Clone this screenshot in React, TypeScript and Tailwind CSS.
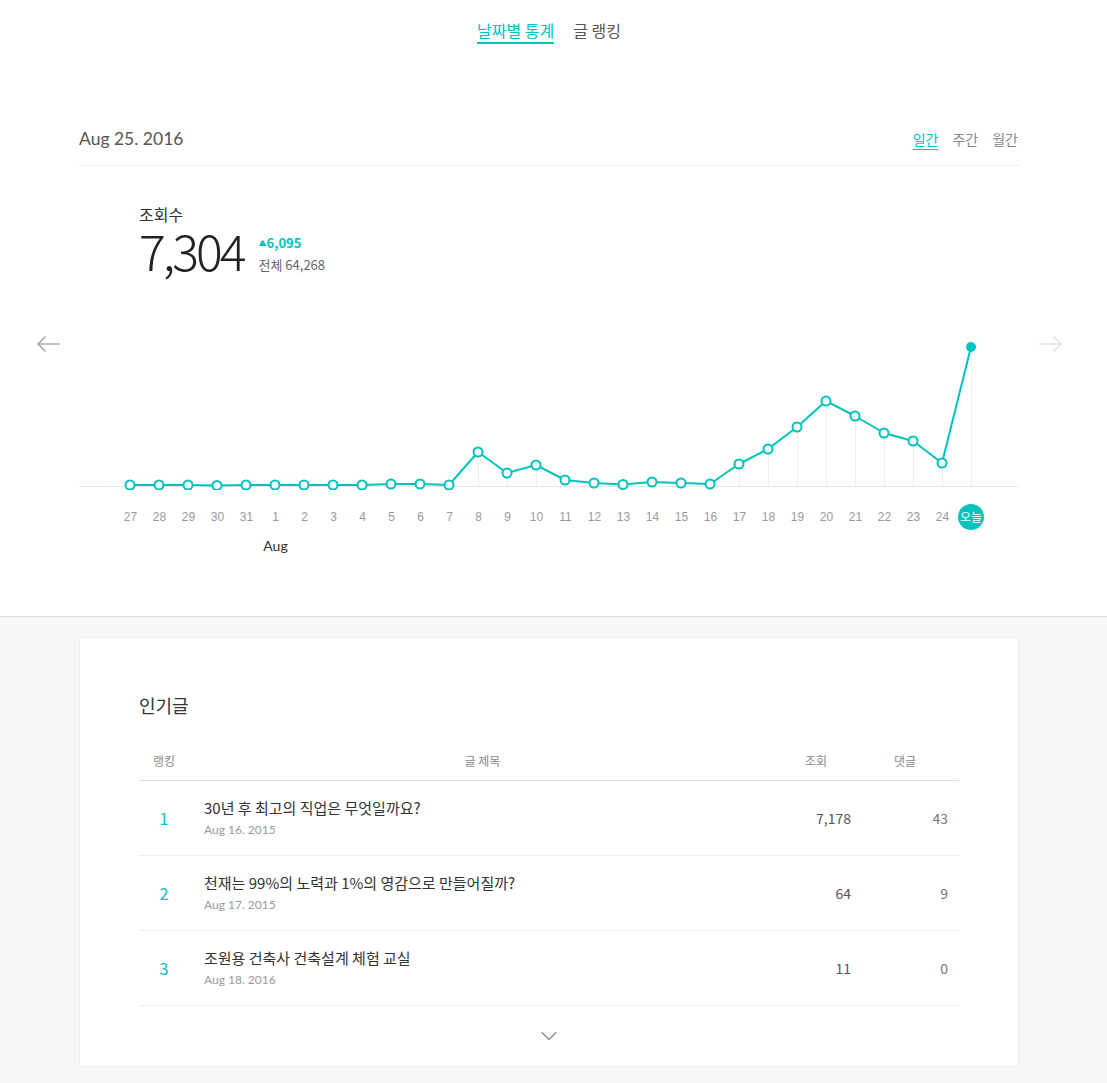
import { ChevronDown } from 'lucide-react';

const TEAL = '#00c3bd';

const labels = ['27', '28', '29', '30', '31', '1', '2', '3', '4', '5', '6', '7', '8', '9', '10', '11', '12', '13', '14', '15', '16', '17', '18', '19', '20', '21', '22', '23', '24'];
// y values in chart coords (baseline = 156)
const ys = [155, 155, 155, 155.5, 155, 155, 155, 155, 155, 154, 154, 155, 122, 143, 135, 150, 153, 154.5, 152, 153, 154, 134, 119, 97, 71, 86, 103, 111, 133, 17];

const posts = [
  { rank: 1, title: '30년 후 최고의 직업은 무엇일까요?', date: 'Aug 16. 2015', views: '7,178', comments: '43' },
  { rank: 2, title: '천재는 99%의 노력과 1%의 영감으로 만들어질까?', date: 'Aug 17. 2015', views: '64', comments: '9' },
  { rank: 3, title: '조원용 건축사 건축설계 체험 교실', date: 'Aug 18. 2016', views: '11', comments: '0' },
];

const kr = "font-['Noto_Sans_CJK_KR','Noto_Sans',sans-serif]";
const lato = "font-['Lato','Noto_Sans_CJK_KR',sans-serif]";

function Arrow({ dir, color }: { dir: 'left' | 'right'; color: string }) {
  return (
    <svg width="24" height="16" viewBox="0 0 24 16" fill="none" stroke={color} strokeWidth="1.2">
      {dir === 'left' ? (
        <>
          <path d="M1 8h22" />
          <path d="M8.5 0.5L1 8l7.5 7.5" />
        </>
      ) : (
        <>
          <path d="M1 8h22" />
          <path d="M15.5 0.5L23 8l-7.5 7.5" />
        </>
      )}
    </svg>
  );
}

function Chart() {
  const xs = ys.map((_, i) => 51 + i * 29);
  const pts = xs.map((x, i) => `${x},${ys[i]}`).join(' ');
  return (
    <svg width="940" height="160" viewBox="0 0 940 160" className="block">
      <line x1="0" y1="156.5" x2="940" y2="156.5" stroke="#e6e6e6" strokeWidth="1" />
      {xs.map((x, i) =>
        ys[i] < 150 ? (
          <line key={i} x1={x + 0.5} y1={ys[i]} x2={x + 0.5} y2="156" stroke="#eeeeee" strokeWidth="1" />
        ) : null
      )}
      <polyline points={pts} fill="none" stroke={TEAL} strokeWidth="2" strokeLinejoin="round" />
      {xs.map((x, i) =>
        i === xs.length - 1 ? (
          <circle key={i} cx={x} cy={ys[i]} r="5" fill={TEAL} />
        ) : (
          <circle key={i} cx={x} cy={ys[i]} r="4.5" fill="#fff" stroke={TEAL} strokeWidth="2" />
        )
      )}
    </svg>
  );
}

export default function App() {
  return (
    <div className={`${kr} min-h-[1083px] bg-[#f7f7f7]`}>
      <section className="bg-white border-b border-[#dddddd]">
        <div className="w-[1098px]">
          <nav className="flex justify-center gap-[19px] pt-[18px] h-[50px]">
            <span className="text-base leading-6 text-[#00c3bd] border-b-2 border-[#00c3bd] h-[26px] pb-0">날짜별 통계</span>
            <span className="text-base leading-6 text-[#555]">글 랭킹</span>
          </nav>

          <div className="w-[940px] mx-auto mt-[76px] pb-[13px] border-b border-[#eeeeee]">
            <div className="h-[26px] flex items-center justify-between">
              <span className={`${lato} text-[17.5px] text-[#555]`}>Aug 25. 2016</span>
              <div className="flex items-center gap-[14px] text-sm text-[#888] pr-[1px]">
                <span className="text-[#00c3bd] underline underline-offset-4">일간</span>
                <span>주간</span>
                <span>월간</span>
              </div>
            </div>
          </div>

          <div className="w-[940px] mx-auto pl-[60px] mt-[36px]">
            <div className="text-base leading-6 text-[#333]">조회수</div>
            <div className="flex items-start gap-[15px] h-[46px]">
              <span className="text-[50px] leading-[46px] font-light text-[#222] tracking-[-3px]">7,304</span>
              <div className="flex flex-col pt-[6px]">
                <span className="text-[13px] leading-[22px] font-bold text-[#00c3bd]">
                  <span className="text-[8px] align-[2px]">▲</span>6,095
                </span>
                <span className="text-[13px] leading-[22px] text-[#666]">전체 64,268</span>
              </div>
            </div>
          </div>

          <div className="flex mt-[58px]">
            <div className="w-[79px] pl-[37px] pt-[6px]">
              <Arrow dir="left" color="#999" />
            </div>
            <div className="w-[940px]">
              <Chart />
              <div className="flex pl-[37px] mt-[14px] h-[26px] items-center">
                {labels.map((l) => (
                  <span key={l} className="w-[29px] text-center text-xs text-[#999] font-['Liberation_Sans',sans-serif]">
                    {l}
                  </span>
                ))}
                <span className="w-[26px] h-[26px] ml-[1px] rounded-full bg-[#00c3bd] text-white text-[12px] flex items-center justify-center">
                  오늘
                </span>
              </div>
              <div className="flex pl-[37px] mt-[6px] pb-[60px]">
                <span className={`${lato} ml-[145px] w-[29px] text-center text-sm leading-5 text-[#333]`}>Aug</span>
              </div>
            </div>
            <div className="w-[79px] pl-[19px] pt-[6px]">
              <Arrow dir="right" color="#ddd" />
            </div>
          </div>
        </div>
      </section>

      <div className="w-[1098px] pt-[20px] pb-[16px]">
        <div className="w-[940px] mx-auto bg-white border border-[#eeeeee] pt-[54px] px-[59px]">
          <h2 className="text-[18px] leading-[26px] text-[#333]">인기글</h2>
          <div className="mt-[23px] h-[40px] flex items-center border-b border-[#dddddd] text-xs text-[#888]">
            <span className="w-[50px] text-center">랭킹</span>
            <span className="flex-1 text-center">글 제목</span>
            <span className="w-[80px] text-center">조회</span>
            <span className="w-[103px] text-center pr-[5px]">댓글</span>
          </div>
          {posts.map((p) => (
            <div key={p.rank} className="h-[75px] flex items-center border-b border-[#eeeeee]">
              <span className="w-[50px] text-center text-base text-[#00c3bd]">{p.rank}</span>
              <div className="flex-1 pl-[15px]">
                <div className="text-[15px] leading-5 text-[#333]">{p.title}</div>
                <div className={`${lato} text-xs leading-4 mt-[4px] text-[#999]`}>{p.date}</div>
              </div>
              <span className="w-[80px] text-right pr-[5px] text-sm text-[#555]">{p.views}</span>
              <span className="w-[103px] text-right pr-[11px] text-sm text-[#777]">{p.comments}</span>
            </div>
          ))}
          <div className="h-[60px] flex items-center justify-center">
            <ChevronDown size={28} strokeWidth={1} color="#888" />
          </div>
        </div>
      </div>
    </div>
  );
}
